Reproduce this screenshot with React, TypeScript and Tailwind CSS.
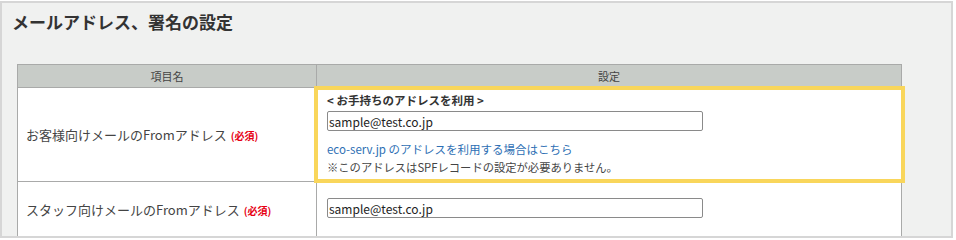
import React from 'react';

const font = { fontFamily: '"Noto Sans CJK JP", "Noto Sans", sans-serif' };

const Required = () => (
  <span className="ml-[4px] text-[10px] font-bold text-[#e60012]">(必須)</span>
);

const AddressInput = ({ value }: { value: string }) => (
  <input
    type="text"
    defaultValue={value}
    className="block h-[20px] w-[376px] rounded-[2px] border border-[#8a8a8a] bg-white px-[1px] text-[12px] leading-none text-[#222] outline-none"
  />
);

export default function App() {
  return (
    <div className="w-[956px] h-[240px] bg-white pt-[1px]" style={font}>
      <div className="h-[237px] w-[953px] overflow-hidden border-2 border-[#d6d6d6] bg-[#f0f1f0]">
        <h2 className="px-[10px] pt-[7px] text-[17px] font-bold leading-[24px] text-[#333]">
          メールアドレス、署名の設定
        </h2>

        <table className="ml-[15px] mt-[30px] w-[885px] table-fixed border-collapse text-[#444]">
          <colgroup>
            <col className="w-[299px]" />
            <col />
          </colgroup>
          <thead>
            <tr className="h-[23px] bg-[#c8ccc8]">
              <th className="border border-[#a9aaa9] text-[11px] font-normal">項目名</th>
              <th className="border border-[#a9aaa9] text-[11px] font-normal">設定</th>
            </tr>
          </thead>
          <tbody className="bg-white">
            <tr className="h-[94px]">
              <td className="border border-[#a9aaa9] px-[8px] text-[13px]">
                お客様向けメールのFromアドレス<Required />
              </td>
              <td className="relative border border-[#a9aaa9] px-[10px] align-top">
                <div className="pointer-events-none absolute -left-[3px] -right-[4px] -top-[2px] -bottom-[2px] border-4 border-[#f9d65b]" />
                <p className="pt-[4px] text-[11.5px] font-bold leading-[16px] text-[#333]">
                  &lt; お手持ちのアドレスを利用 &gt;
                </p>
                <div className="mt-[3px]">
                  <AddressInput value="sample@test.co.jp" />
                </div>
                <a className="mt-[9px] block text-[11.5px] leading-[18px] text-[#2e6fb4]">
                  eco-serv.jp のアドレスを利用する場合はこちら
                </a>
                <p className="text-[11.3px] leading-[18px] text-[#444]">
                  ※このアドレスはSPFレコードの設定が必要ありません。
                </p>
              </td>
            </tr>
            <tr className="h-[56px]">
              <td className="border border-[#a9aaa9] px-[8px] text-[13px]">
                スタッフ向けメールのFromアドレス<Required />
              </td>
              <td className="border border-[#a9aaa9] px-[10px] pt-[16px] align-top">
                <AddressInput value="sample@test.co.jp" />
              </td>
            </tr>
          </tbody>
        </table>
      </div>
    </div>
  );
}
